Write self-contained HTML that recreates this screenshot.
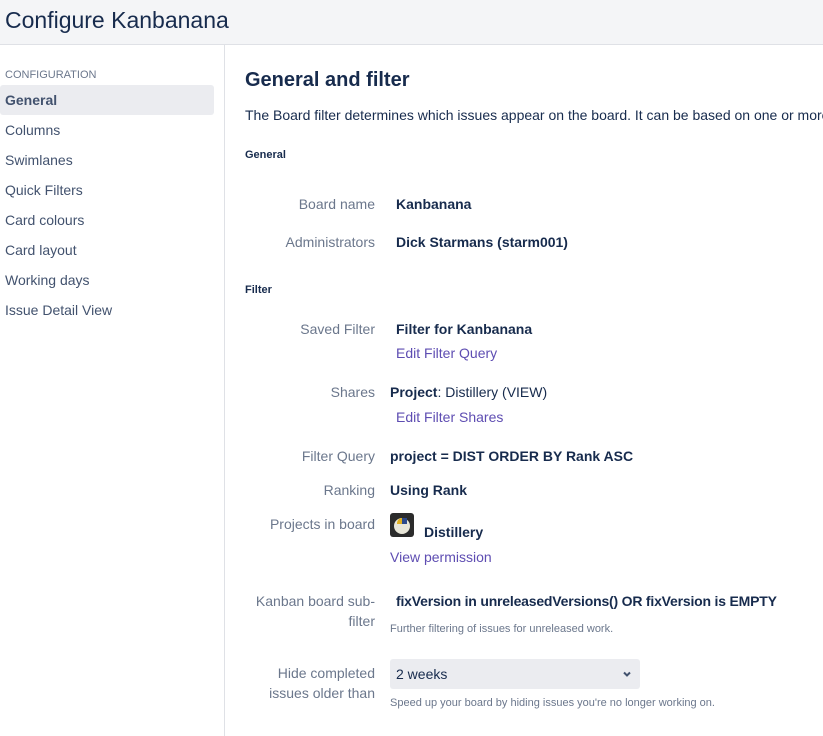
<!DOCTYPE html>
<html><head><meta charset="utf-8"><style>
*{margin:0;padding:0;box-sizing:border-box}
body{width:823px;height:736px;overflow:hidden;background:#fff;font-family:"Liberation Sans",sans-serif;color:#172b4d;position:relative;font-size:14px}
.a{position:absolute;white-space:nowrap}
.hdr{position:absolute;left:0;top:0;width:823px;height:45px;background:#f4f5f7;border-bottom:1px solid #dfe1e6}
.side{position:absolute;left:224px;top:45px;width:1px;height:691px;background:#dfe1e6}
.nav{left:5px;font-size:14px;color:#42526e}
.lbl{right:448px;color:#6b778c;text-align:right}
.b{font-weight:bold}
.lk{color:#5e4db2}
.sm{font-size:11px;color:#6b778c}
</style></head><body>
<div class="hdr"></div>
<div class="a" style="left:5px;top:7px;font-size:23px;color:#172b4d">Configure Kanbanana</div>
<div class="side"></div>
<div class="a" style="left:5px;top:69px;font-size:11px;color:#6b778c">CONFIGURATION</div>
<div class="a" style="left:0;top:85px;width:214px;height:30px;background:#ebecf0;border-radius:3px"></div>
<div class="a nav b" style="top:92px;color:#42526e">General</div>
<div class="a nav" style="top:122px">Columns</div>
<div class="a nav" style="top:152px">Swimlanes</div>
<div class="a nav" style="top:182px">Quick Filters</div>
<div class="a nav" style="top:212px">Card colours</div>
<div class="a nav" style="top:242px">Card layout</div>
<div class="a nav" style="top:272px">Working days</div>
<div class="a nav" style="top:302px">Issue Detail View</div>

<div class="a b" style="left:245px;top:69px;font-size:20px">General and filter</div>
<div class="a" style="left:245px;top:107px;width:578px;overflow:hidden">The Board filter determines which issues appear on the board. It can be based on one or more projects, or custom JQL.</div>
<div class="a b" style="left:245px;top:149px;font-size:11px">General</div>
<div class="a lbl" style="top:196px">Board name</div>
<div class="a b" style="left:396px;top:196px">Kanbanana</div>
<div class="a lbl" style="top:234px">Administrators</div>
<div class="a b" style="left:396px;top:234px">Dick Starmans (starm001)</div>
<div class="a b" style="left:245px;top:284px;font-size:11px">Filter</div>
<div class="a lbl" style="top:321px">Saved Filter</div>
<div class="a b" style="left:396px;top:321px">Filter for Kanbanana</div>
<div class="a lk" style="left:396px;top:345px">Edit Filter Query</div>
<div class="a lbl" style="top:384px">Shares</div>
<div class="a" style="left:390px;top:384px"><b>Project</b>: Distillery (VIEW)</div>
<div class="a lk" style="left:396px;top:409px">Edit Filter Shares</div>
<div class="a lbl" style="top:448px">Filter Query</div>
<div class="a b" style="left:390px;top:448px">project = DIST ORDER BY Rank ASC</div>
<div class="a lbl" style="top:482px">Ranking</div>
<div class="a b" style="left:390px;top:482px">Using Rank</div>
<div class="a lbl" style="top:516px">Projects in board</div>
<div class="a" style="left:390px;top:513px;width:24px;height:24px;background:#2b2b2b;border-radius:3px">
<div style="position:absolute;left:4px;top:5px;width:16px;height:16px;border-radius:50%;background:#e8e6d8"></div>
<div style="position:absolute;left:7px;top:5px;width:10px;height:6px;border-radius:5px 5px 0 0;background:#e0b020"></div>
<div style="position:absolute;left:12px;top:5px;width:5px;height:6px;background:#2c4a8c"></div>
</div>
<div class="a b" style="left:424px;top:524px">Distillery</div>
<div class="a lk" style="left:390px;top:549px">View permission</div>
<div class="a lbl" style="top:593px">Kanban board sub-</div>
<div class="a lbl" style="top:613px">filter</div>
<div class="a b" style="left:396px;top:593px;letter-spacing:-0.2px">fixVersion in unreleasedVersions() OR fixVersion is EMPTY</div>
<div class="a sm" style="left:390px;top:623px">Further filtering of issues for unreleased work.</div>
<div class="a lbl" style="top:665px">Hide completed</div>
<div class="a lbl" style="top:685px">issues older than</div>
<div class="a" style="left:390px;top:659px;width:250px;height:30px;background:#ebecf0;border-radius:3px"></div>
<div class="a" style="left:396px;top:666px">2 weeks</div>
<svg class="a" style="left:622px;top:670px" width="10" height="8" viewBox="0 0 10 8"><path d="M2 2.5L5 5.5L8 2.5" stroke="#42526e" stroke-width="2" fill="none"/></svg>
<div class="a sm" style="left:390px;top:697px">Speed up your board by hiding issues you're no longer working on.</div>
</body></html>
